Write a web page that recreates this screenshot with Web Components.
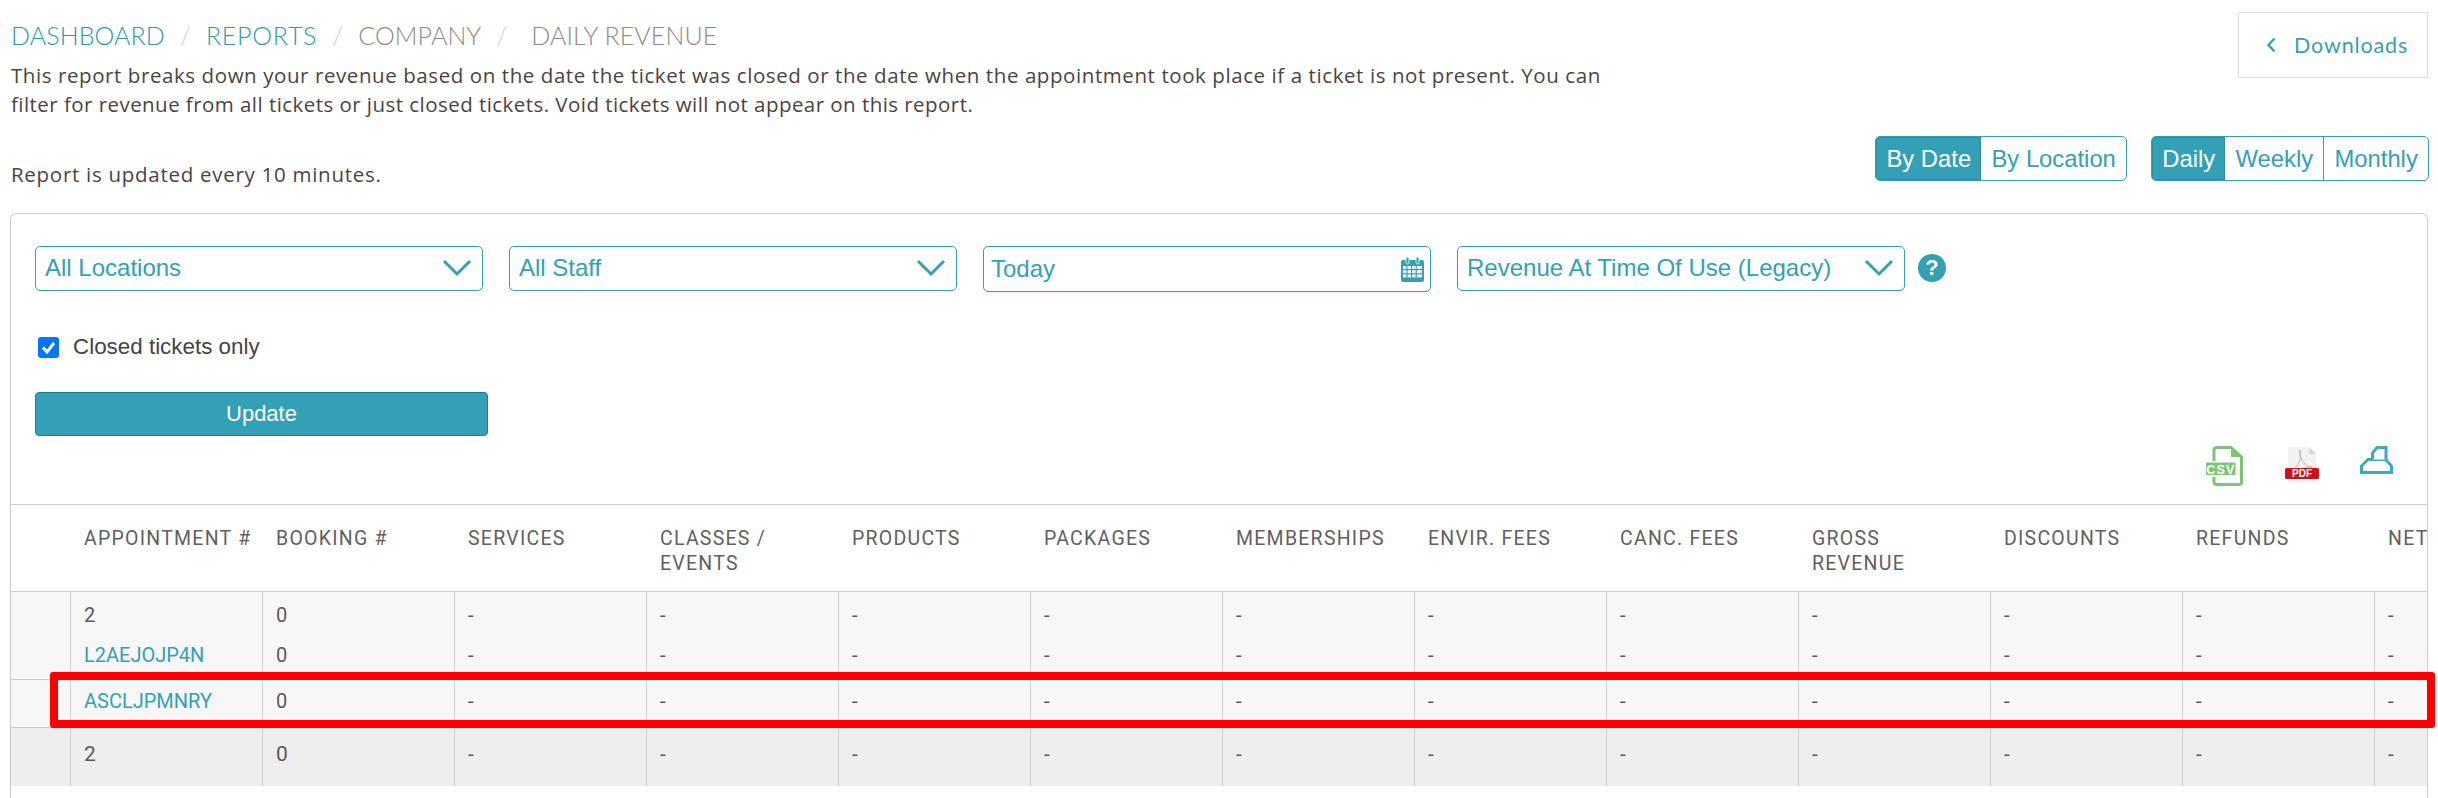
<!DOCTYPE html>
<html>
<head>
<meta charset="utf-8">
<title>Daily Revenue</title>
<style>
html,body{margin:0;padding:0;background:#fff;}
body{height:798px;overflow:hidden;font-family:"Lato","Liberation Sans",sans-serif;color:#4a4a4a;}
</style>
</head>
<body>
<report-page>
    <report-header slot="header"></report-header>
    <filter-panel slot="filters"></filter-panel>
    <revenue-table slot="table"></revenue-table>
</report-page>

<script>
class ReportPage extends HTMLElement{
    constructor(){
        super()
        this.attachShadow({mode:'open'})
    }
    connectedCallback(){
        this.shadowRoot.innerHTML = `
        <style>
            :host{display:block;width:2438px;height:798px;overflow:hidden;}
            .panel{
                margin:0 10px 0 10px;
                height:700px;
                border:1px solid #ccc;
                border-bottom:0;
                border-radius:6px 6px 0 0;
                box-sizing:border-box;
            }
        </style>
        <slot name="header"></slot>
        <div class="panel">
            <slot name="filters"></slot>
            <slot name="table"></slot>
        </div>
        `
    }
}

class ReportHeader extends HTMLElement{
    constructor(){
        super()
        this.attachShadow({mode:'open'})
    }
    connectedCallback(){
        this.shadowRoot.innerHTML = `
        <style>
            :host{display:flex;justify-content:space-between;height:213px;box-sizing:border-box;font-family:"Lato",sans-serif;}
            .left{padding:20px 0 0 11px;width:1640px;}
            .crumbs{display:flex;font-size:25px;line-height:30px;font-weight:300;letter-spacing:.1px;color:#8f8a86;}
            .crumbs a{color:#2b9ab0;}
            .crumbs a.wide{letter-spacing:.75px;}
            .crumbs i{font-style:normal;color:#ccc;margin:0 15px;}
            .crumbs i.last{margin:0 24px 0 15px;}
            p{margin:0;font-family:"Open Sans",sans-serif;font-size:20.5px;line-height:29px;color:#4a4440;letter-spacing:.58px;}
            .desc{margin-top:11px;}
            .desc span{letter-spacing:.45px;}
            .note{margin-top:41px;letter-spacing:.72px;}
            .right{width:580px;margin-right:10px;padding-top:12px;display:flex;flex-direction:column;align-items:flex-end;}
            .downloads{
                width:190px;height:66px;box-sizing:border-box;border:1px solid #ddd;
                display:flex;align-items:center;padding-left:27px;gap:17px;
                color:#33a0b5;font-size:21.5px;letter-spacing:.85px;
            }
            .toggles{margin-top:58px;margin-right:-1px;display:flex;gap:24px;white-space:nowrap;}
        </style>
        <div class="left">
            <div class="crumbs">
                <a>DASHBOARD</a><i>/</i><a class="wide">REPORTS</a><i>/</i><span>COMPANY</span><i class="last">/</i><span>DAILY REVENUE</span>
            </div>
            <p class="desc">This report breaks down your revenue based on the date the ticket was closed or the date when the appointment took place if a ticket is not present. You can<br><span>filter for revenue from all tickets or just closed tickets. Void tickets will not appear on this report.</span></p>
            <p class="note">Report is updated every 10 minutes.</p>
        </div>
        <div class="right">
            <div class="downloads">
                <svg width="11" height="18" viewBox="0 0 11 18"><path d="M8.5 2.5 2.5 9l6 6.5" fill="none" stroke="#33a0b5" stroke-width="2.4"/></svg>
                <span>Downloads</span>
            </div>
            <div class="toggles">
                <toggle-group items="By Date,By Location"></toggle-group>
                <toggle-group items="Daily,Weekly,Monthly"></toggle-group>
            </div>
        </div>
        `
    }
}

class ToggleGroup extends HTMLElement{
    constructor(){
        super()
        this.attachShadow({mode:'open'})
    }
    connectedCallback(){
        const items = this.getAttribute('items').split(',')
        this.shadowRoot.innerHTML = `
        <style>
            :host{display:inline-flex;flex:none;height:45px;box-sizing:border-box;border:1px solid #33a0b5;border-radius:5px;overflow:hidden;white-space:nowrap;
                font-family:"Liberation Sans",sans-serif;font-size:23.8px;color:#33a0b5;}
            span{display:flex;align-items:center;padding:0 10.2px;border-left:1px solid #33a0b5;}
            span:first-of-type{border-left:0;background:#33a0b5;color:#fff;box-shadow:inset 0 0 0 1px #2a8b9e;}
            span:nth-of-type(2){border-left:0;}
        </style>
        ${items.map(i=>`<span>${i}</span>`).join('')}
        `
    }
}

class FilterSelect extends HTMLElement{
    constructor(){
        super()
        this.attachShadow({mode:'open'})
    }
    connectedCallback(){
        this.shadowRoot.innerHTML = `
        <style>
            :host{display:flex;align-items:center;justify-content:space-between;height:45px;box-sizing:border-box;
                width:448px;border:1px solid #33a0b5;border-radius:5px;padding:0 10px 2px 9px;
                font-family:"Liberation Sans",sans-serif;font-size:24px;color:#33a0b5;}
        </style>
        <slot></slot>
        <svg width="30" height="18" viewBox="0 0 30 18"><path d="M2 2 15 15 28 2" fill="none" stroke="#33a0b5" stroke-width="3"/></svg>
        `
    }
}

class DateInput extends HTMLElement{
    constructor(){
        super()
        this.attachShadow({mode:'open'})
    }
    connectedCallback(){
        this.shadowRoot.innerHTML = `
        <style>
            :host{display:flex;align-items:center;justify-content:space-between;height:46px;box-sizing:border-box;
                width:448px;border:1px solid #33a0b5;border-radius:5px;padding:0 6px 0 7px;
                font-family:"Liberation Sans",sans-serif;font-size:24px;color:#33a0b5;}
        </style>
        <slot></slot>
        <svg width="23" height="25" viewBox="0 0 23 25">
            <rect x="0" y="3" width="23" height="22" rx="2" fill="#33a0b5"/>
            <rect x="5" y="0" width="3" height="7" rx="1.5" fill="#33a0b5" stroke="#fff" stroke-width=".8"/>
            <rect x="15" y="0" width="3" height="7" rx="1.5" fill="#33a0b5" stroke="#fff" stroke-width=".8"/>
            <g fill="#fff">
                <rect x="2" y="9" width="3.4" height="3"/><rect x="6.6" y="9" width="3.4" height="3"/><rect x="11.2" y="9" width="3.4" height="3"/><rect x="15.8" y="9" width="5" height="3"/>
                <rect x="2" y="13.2" width="3.4" height="3"/><rect x="6.6" y="13.2" width="3.4" height="3"/><rect x="11.2" y="13.2" width="3.4" height="3"/><rect x="15.8" y="13.2" width="5" height="3"/>
                <rect x="2" y="17.4" width="3.4" height="3"/><rect x="6.6" y="17.4" width="3.4" height="3"/><rect x="11.2" y="17.4" width="3.4" height="3"/><rect x="15.8" y="17.4" width="5" height="3"/>
            </g>
        </svg>
        `
    }
}

class FilterPanel extends HTMLElement{
    constructor(){
        super()
        this.attachShadow({mode:'open'})
    }
    connectedCallback(){
        this.shadowRoot.innerHTML = `
        <style>
            :host{display:block;height:290px;box-sizing:border-box;padding:32px 0 0 24px;position:relative;font-family:"Liberation Sans",sans-serif;}
            .row{display:flex;gap:26px;align-items:flex-start;}
            .help{
                width:28px;height:28px;border-radius:50%;background:#33a0b5;color:#fff;margin:8px 0 0 -13px;
                font:bold 22px/28px "Liberation Sans",sans-serif;text-align:center;
            }
            label{display:flex;align-items:center;gap:14px;margin-top:42px;font-size:22.4px;line-height:26px;color:#444;padding-left:3px;}
            .box{width:21px;height:21px;border-radius:3px;background:#0075ff;display:flex;align-items:center;justify-content:center;}
            button{
                display:block;margin-top:32px;width:453px;height:44px;box-sizing:border-box;
                background:#33a0b5;border:1px solid #1f7f90;border-radius:4px;color:#fff;
                font:22px "Liberation Sans",sans-serif;padding:0;
            }
            .exports{display:flex;align-items:flex-start;position:absolute;top:232px;left:2195px;}
        </style>
        <div class="row">
            <filter-select>All Locations</filter-select>
            <filter-select>All Staff</filter-select>
            <date-input>Today</date-input>
            <filter-select>Revenue At Time Of Use (Legacy)</filter-select>
            <div class="help">?</div>
        </div>
        <label>
            <span class="box"><svg width="15" height="13" viewBox="0 0 15 13"><path d="M2 6.500 6 11 13 2" fill="none" stroke="#fff" stroke-width="3"/></svg></span>
            Closed tickets only
        </label>
        <button>Update</button>
        <div class="exports">
            <svg width="38" height="40" viewBox="0 0 38 40">
                <path d="M8 15V4q0-2.500 2.500-2.500H25L35.500 11v25q0 2.500-2.500 2.500H10.500Q8 38.500 8 36V31" fill="none" stroke="#7cc576" stroke-width="3"/>
                <path d="M25 1.500V11h10.500z" fill="#7cc576"/>
                <rect x="0" y="16.500" width="29.500" height="12.500" rx="1" fill="#7cc576"/>
                <text x="15" y="27.500" text-anchor="middle" fill="#fff" font-family="Liberation Sans" font-weight="bold" font-size="12.500" letter-spacing="1.200">CSV</text>
            </svg>
            <svg style="margin:1px 0 0 41px" width="34" height="36" viewBox="0 0 34 36">
                <path d="M3 0H24L31 7V36H3z" fill="#f2f2f2"/>
                <path d="M24 0V7H31z" fill="#d8d8d8"/>
                <path d="M15 3c-1 5 1 9 5 14 2 2 4 3 7 3-4 0-9 1-13 3-2 1-4 3-6 2 1-3 5-6 7-12 1-3 0-6 0-10z" fill="none" stroke="#b9b9b9" stroke-width="1"/>
                <rect x="0" y="21" width="34" height="11" rx="1.500" fill="#c4161c"/>
                <text x="17" y="30" text-anchor="middle" fill="#fff" font-family="Liberation Sans" font-weight="bold" font-size="10">PDF</text>
            </svg>
            <svg style="margin-left:41px" width="34" height="29" viewBox="0 0 34 29">
                <path d="M1.500 26.500V20L8 13.500H25.500L31.500 20V26.500z" fill="none" stroke="#3fa9c0" stroke-width="3"/>
                <path d="M12.500 13.500V7L17 1.500H26V13.500" fill="#fff" stroke="#3fa9c0" stroke-width="3"/>
            </svg>
        </div>
        `
    }
}

class RevenueTable extends HTMLElement{
    constructor(){
        super()
        this.attachShadow({mode:'open'})
    }

    getStyle(){
        return `
        <style>
            :host{display:block;position:relative;font-family:"Roboto",sans-serif;height:410px;}
            .wrap{width:100%;overflow:hidden;border-top:1px solid #ccc;box-sizing:border-box;}
            .grid{display:grid;grid-template-columns:59px repeat(13,192px);width:2555px;}
            .h{
                height:87px;box-sizing:border-box;padding:21px 6px 0 14px;border-bottom:1px solid #ccc;
                font-size:19.500px;line-height:25px;letter-spacing:1.25px;color:#5f5f5f;
            }
            .c{
                box-sizing:border-box;padding:0 13px;border-left:1px solid #ccc;
                font-size:20px;color:#5a5a5a;background:#f7f7f7;
            }
            .first{border-left:0;}
            .r1{height:88px;border-bottom:1px solid #ccc;padding-top:3px;line-height:40px;}
            .r2{height:48px;border-bottom:1px solid #ccc;line-height:42px;}
            .r3{height:58px;line-height:52px;background:#eee;font-size:21px;}
            a{color:#33a0b5;}
            .mark{
                position:absolute;left:39px;top:168px;width:2385px;height:56px;box-sizing:border-box;
                border:8px solid #f00;border-radius:3px;
            }
        </style>
        `
    }

    render(){
        const heads = ['','APPOINTMENT #','BOOKING #','SERVICES','CLASSES /<br>EVENTS','PRODUCTS','PACKAGES','MEMBERSHIPS','ENVIR. FEES','CANC. FEES','GROSS<br>REVENUE','DISCOUNTS','REFUNDS','NET']
        const dash = n => Array(n).fill('-')
        const cell = (cls,t,i) => `<div class="c ${cls} ${i==0?'first':''}">${t}</div>`
        const r1 = ['','2<br><a>L2AEJOJP4N</a>','0<br>0'].concat(dash(11).map(()=>'-<br>-'))
        const r2 = ['','<a>ASCLJPMNRY</a>','0'].concat(dash(11))
        const r3 = ['','2','0'].concat(dash(11))
        this.shadowRoot.innerHTML = `
        ${this.getStyle()}
        <div class="wrap"><div class="grid">
            ${heads.map(h=>`<div class="h">${h}</div>`).join('')}
            ${r1.map((t,i)=>cell('r1',t,i)).join('')}
            ${r2.map((t,i)=>cell('r2',t,i)).join('')}
            ${r3.map((t,i)=>cell('r3',t,i)).join('')}
        </div></div>
        <div class="mark"></div>
        `
    }

    connectedCallback(){
        this.render()
    }
}

customElements.define('toggle-group',ToggleGroup)
customElements.define('filter-select',FilterSelect)
customElements.define('date-input',DateInput)
customElements.define('filter-panel',FilterPanel)
customElements.define('revenue-table',RevenueTable)
customElements.define('report-header',ReportHeader)
customElements.define('report-page',ReportPage)
</script>
</body>
</html>
